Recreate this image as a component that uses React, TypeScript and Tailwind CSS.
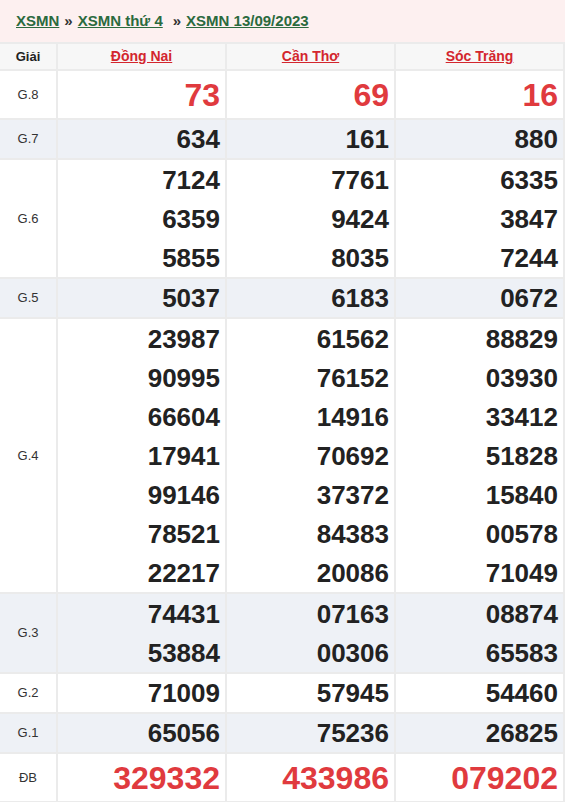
import React from "react"

type Row = {
  label: string
  values: string[][]
  alt?: boolean
  big?: boolean
}

const rows: Row[] = [
  { label: "G.8", values: [["73"], ["69"], ["16"]], big: true },
  { label: "G.7", values: [["634"], ["161"], ["880"]], alt: true },
  {
    label: "G.6",
    values: [
      ["7124", "6359", "5855"],
      ["7761", "9424", "8035"],
      ["6335", "3847", "7244"],
    ],
  },
  { label: "G.5", values: [["5037"], ["6183"], ["0672"]], alt: true },
  {
    label: "G.4",
    values: [
      ["23987", "90995", "66604", "17941", "99146", "78521", "22217"],
      ["61562", "76152", "14916", "70692", "37372", "84383", "20086"],
      ["88829", "03930", "33412", "51828", "15840", "00578", "71049"],
    ],
  },
  {
    label: "G.3",
    values: [
      ["74431", "53884"],
      ["07163", "00306"],
      ["08874", "65583"],
    ],
    alt: true,
  },
  { label: "G.2", values: [["71009"], ["57945"], ["54460"]] },
  { label: "G.1", values: [["65056"], ["75236"], ["26825"]], alt: true },
  { label: "ĐB", values: [["329332"], ["433986"], ["079202"]], big: true },
]

const stations = ["Đồng Nai", "Cần Thơ", "Sóc Trăng"]

export default function App() {
  return (
    <div className="w-[565px] bg-white font-['Liberation_Sans',Arial,sans-serif]">
      {/* breadcrumb */}
      <div className="flex h-[42px] items-center bg-[#fdf0f0] pl-4 text-[15px] font-bold text-[#333]">
        <a href="#" className="text-[#2b6a3e] underline">XSMN</a>
        <span className="mx-[5px]">»</span>
        <a href="#" className="text-[#2b6a3e] underline">XSMN thứ 4</a>
        <span className="ml-[10px] mr-[5px]">»</span>
        <a href="#" className="text-[#2b6a3e] underline">XSMN 13/09/2023</a>
      </div>

      <table className="w-full table-fixed border-collapse">
        <colgroup>
          <col className="w-[57px]" />
          <col />
          <col />
          <col />
        </colgroup>
        <thead>
          <tr className="h-[27px] bg-[#f7f7f7]">
            <th className="border-2 border-l-0 border-[#ebebeb] text-[13px] font-bold text-[#222]">Giải</th>
            {stations.map((s) => (
              <th key={s} className="border-2 border-[#ebebeb] text-[14px] font-bold">
                <a href="#" className="text-[#d3262e] underline">{s}</a>
              </th>
            ))}
          </tr>
        </thead>
        <tbody>
          {rows.map((row) => (
            <tr key={row.label} className={row.alt ? "bg-[#eef1f6]" : "bg-white"}>
              <td className="border-2 border-l-0 border-[#ebebeb] text-center text-[13px] text-[#333]">
                {row.label}
              </td>
              {row.values.map((col, i) => (
                <td key={i} className="border-2 border-[#ebebeb] pr-[5px] text-right align-middle">
                  {col.map((v) =>
                    row.big ? (
                      <div key={v} className="flex h-[47px] items-center justify-end text-[32px] font-bold leading-none text-[#e03a3e]">
                        {v}
                      </div>
                    ) : col.length === 1 ? (
                      <div key={v} className="flex h-[38px] items-center justify-end text-[26px] font-bold leading-none text-[#222]">
                        {v}
                      </div>
                    ) : (
                      <div key={v} className="flex h-[39px] items-center justify-end text-[26px] font-bold leading-none text-[#222]">
                        {v}
                      </div>
                    ),
                  )}
                </td>
              ))}
            </tr>
          ))}
        </tbody>
      </table>
    </div>
  )
}
